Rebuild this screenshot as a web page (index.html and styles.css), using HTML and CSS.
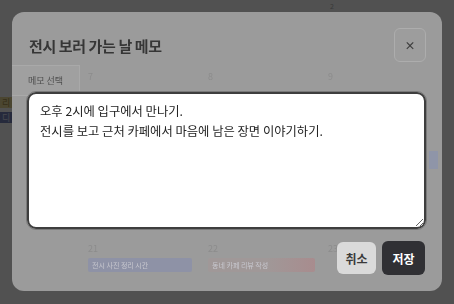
FILE: index.html
```html
<html>

<head>
    <meta charset="UTF-8">
    <link rel="stylesheet" href="styles.css">
</head>

<body>
    <div class="page">
        <div class="page-top"><span>2</span></div>
        <div class="page-events">
            <div class="ev ev-yellow">리</div>
            <div class="ev ev-blue">디</div>
        </div>
    </div>

    <div class="backdrop"></div>

    <div class="modal">
        <div class="modal-head">
            <h2>전시 보러 가는 날 메모</h2>
            <button class="close">×</button>
        </div>

        <div class="cal">
            <div class="cal-row">
                <div class="pick">메모 선택</div>
                <div class="day"><span class="num">7</span></div>
                <div class="day"><span class="num">8</span></div>
                <div class="day"><span class="num">9</span><div class="side-ev"></div></div>
            </div>
            <div class="cal-row cal-row-bottom">
                <div class="pick-empty"></div>
                <div class="day"><span class="num">21</span><div class="bar bar-blue">전시 사진 정리 시간</div></div>
                <div class="day"><span class="num">22</span><div class="bar bar-red">동네 카페 리뷰 작성</div></div>
                <div class="day"><span class="num">23</span></div>
            </div>
        </div>

        <textarea class="memo">오후 2시에 입구에서 만나기.
전시를 보고 근처 카페에서 마음에 남은 장면 이야기하기.</textarea>

        <div class="actions">
            <button class="btn btn-cancel">취소</button>
            <button class="btn btn-save">저장</button>
        </div>
    </div>
</body>

</html>
```

FILE: styles.css
```css
* {
    font-family: "Noto Sans CJK KR", "Noto Sans", sans-serif;
    box-sizing: border-box;
}
body {
    margin: 0;
    width: 454px;
    height: 304px;
    overflow: hidden;
    background: #fff;
}
.page {
    height: 304px;
}
.page-top {
    height: 12px;
    padding: 2px 0 0 330px;
    font-size: 7px;
    line-height: 8px;
    color: #999;
}
.page-events {
    margin-top: 85px;
    width: 12px;
    display: flex;
    flex-direction: column;
    gap: 4px;
}
.ev {
    height: 11px;
    font-size: 9px;
    line-height: 11px;
    overflow: hidden;
    padding-left: 2px;
}
.ev-yellow {
    background: #e6d27a;
    color: #8a6a10;
}
.ev-blue {
    background: #4b5ea8;
    color: #cfd6f2;
}
.backdrop {
    position: fixed;
    inset: 0;
    background: rgba(26, 26, 26, 0.76);
}
.modal {
    position: fixed;
    left: 12px;
    top: 12px;
    width: 430px;
    height: 279px;
    background: #9b9b9b;
    border-radius: 12px;
    overflow: hidden;
}
.modal-head {
    display: flex;
    justify-content: space-between;
    align-items: flex-start;
    padding: 16px 17px 0 17px;
    height: 53px;
}
.modal-head h2 {
    margin: 7px 0 0 0;
    font-size: 15px;
    font-weight: 700;
    color: #363636;
    letter-spacing: -0.4px;
}
.close {
    width: 32px;
    height: 34px;
    margin-right: -1px;
    background: #9d9d9d;
    border: 1px solid #adadad;
    border-radius: 6px;
    color: #3e3e3e;
    font-size: 11px;
    font-weight: 700;
    padding: 0;
}
.cal-row {
    display: grid;
    grid-template-columns: 68px 120px 120px 122px;
    height: 40px;
}
.pick {
    border: 1px solid #a9a9a9;
    border-left: none;
    background: #a0a0a0;
    font-size: 9px;
    color: #4e4e4e;
    padding: 8px 0 0 16px;
    height: 31px;
}
.day {
    padding: 5px 0 0 8px;
    font-size: 9px;
    color: #8c8c8c;
}
.side-ev {
    margin: 68px 4px 0 auto;
    width: 9px;
    height: 18px;
    background: #8f95a8;
}
.cal-row-bottom {
    margin-top: 132px;
}
.bar {
    margin-top: 3px;
    height: 14px;
    width: 104px;
    font-size: 7px;
    line-height: 14px;
    padding-left: 4px;
    color: #c8c8cf;
    border-radius: 2px;
}
.bar-blue {
    background: #8e92a6;
}
.bar-red {
    width: 107px;
    background: linear-gradient(90deg, #a09898 55%, #a88c8e 100%);
}
.memo {
    position: absolute;
    left: 15px;
    top: 80px;
    width: 399px;
    height: 137px;
    border: 2px solid #3e3e3e;
    outline: 1px solid #7a7a7a;
    border-radius: 9px;
    background: #fff;
    padding: 7px 11px;
    font-size: 12.3px;
    line-height: 20px;
    color: #222;
    resize: both;
}
.actions {
    position: absolute;
    right: 17px;
    top: 229px;
    display: flex;
    gap: 6px;
    align-items: center;
}
.btn {
    border: none;
    border-radius: 6px;
    font-size: 12px;
    font-weight: 700;
    padding: 0;
}
.btn-cancel {
    width: 39px;
    height: 32px;
    background: #dadada;
    color: #3a3a3a;
}
.btn-save {
    width: 43px;
    height: 34px;
    background: #303034;
    color: #fff;
}
```
